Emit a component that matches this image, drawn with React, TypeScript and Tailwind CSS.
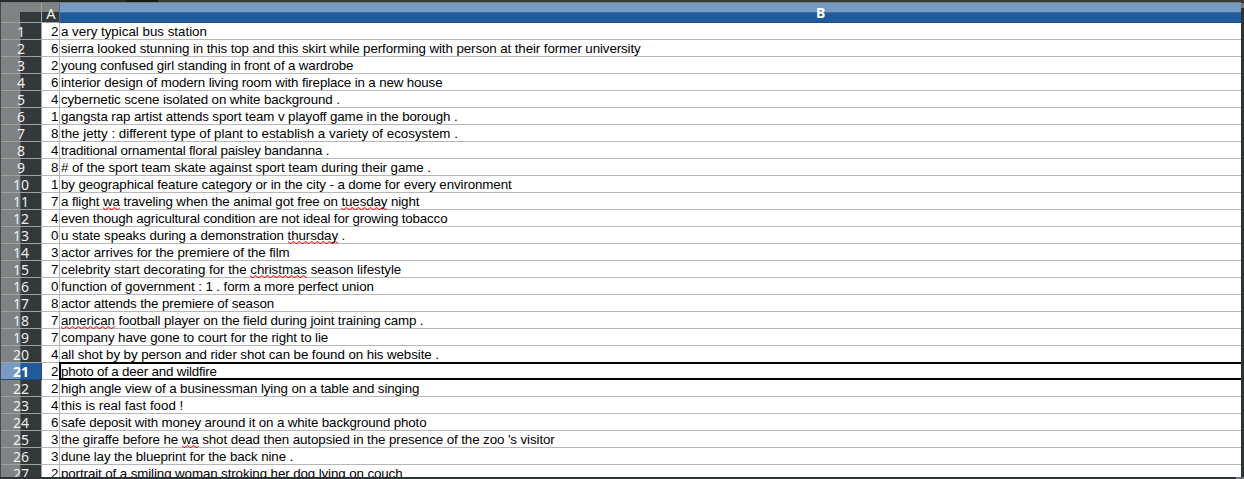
// value, caption, and the pixels by which the caption is tightened
const rows: [number, string, number][] = [
  [2, 'a very typical bus station', 0],
  [6, 'sierra looked stunning in this top and this skirt while performing with person at their former university', 10],
  [2, 'young confused girl standing in front of a wardrobe', 7],
  [6, 'interior design of modern living room with fireplace in a new house', 9],
  [4, 'cybernetic scene isolated on white background .', 5],
  [1, 'gangsta rap artist attends sport team v playoff game in the borough .', 7],
  [8, 'the jetty : different type of plant to establish a variety of ecosystem .', 0],
  [4, 'traditional ornamental floral paisley bandanna .', 8],
  [8, '# of the sport team skate against sport team during their game .', 5],
  [1, 'by geographical feature category or in the city - a dome for every environment', 8],
  [7, 'a flight wa traveling when the animal got free on tuesday night', 7],
  [4, 'even though agricultural condition are not ideal for growing tobacco', 10],
  [0, 'u state speaks during a demonstration thursday .', 4],
  [3, 'actor arrives for the premiere of the film', 4],
  [7, 'celebrity start decorating for the christmas season lifestyle', 2],
  [0, 'function of government : 1 . form a more perfect union', 5],
  [8, 'actor attends the premiere of season', 4],
  [7, 'american football player on the field during joint training camp .', 8],
  [7, 'company have gone to court for the right to lie', 4],
  [4, 'all shot by by person and rider shot can be found on his website .', 6],
  [2, 'photo of a deer and wildfire', 5],
  [2, 'high angle view of a businessman lying on a table and singing', 7],
  [4, 'this is real fast food !', 0],
  [6, 'safe deposit with money around it on a white background photo', 8],
  [3, "the giraffe before he wa shot dead then autopsied in the presence of the zoo 's visitor", 8],
  [3, 'dune lay the blueprint for the back nine .', 5],
  [2, 'portrait of a smiling woman stroking her dog lying on couch', 6],
];

const SELECTED = 21;

function Squiggle({ id }: { id: string }) {
  return (
    <svg className="absolute left-0 top-[14px] h-[3px] w-full" aria-hidden="true">
      <defs>
        <pattern id={id} width="6" height="3" patternUnits="userSpaceOnUse">
          <path d="M-1 0.8 L0 0.8 L2 2.4 L3 2.4 L5 0.8 L7 0.8" fill="none" stroke="#f00000" strokeWidth="1" />
        </pattern>
      </defs>
      <rect width="100%" height="3" fill={`url(#${id})`} />
    </svg>
  );
}

function CellText({ text, row, tighten }: { text: string; row: number; tighten: number }) {
  return (
    <span style={{ letterSpacing: `${-tighten / text.length}px` }}>
      {text.split(/\b(wa|tuesday|thursday|christmas|american)\b/).map((part, i) =>
        i % 2 ? (
          <span key={i} className="relative inline-block">
            {part}
            <Squiggle id={`sq-${row}-${i}`} />
          </span>
        ) : (
          part
        ),
      )}
    </span>
  );
}

export default function App() {
  return (
    <div className="flex h-[479px] w-[1244px] flex-col overflow-hidden bg-[#2e3436] font-['Liberation_Sans',Arial,sans-serif] text-[13.333px] leading-[17px] text-black">
      <div className="flex h-0.5 shrink-0 bg-[#363b3c]">
        <div className="w-[127px] bg-[#252a2b]" />
        <div className="w-[31px] bg-[#151819]" />
      </div>
      <div className="flex h-[475px] shrink-0">
        <div className="w-px bg-[#45474a]" />
        <div className="w-[1240px] overflow-hidden bg-white">
          <div className="flex h-[21px] border-t border-[#777b7b] font-['Noto_Sans','Open_Sans',sans-serif] text-sm text-white">
            <div className="flex w-10 flex-col border-b border-[#a0a2a2] bg-[#7f8383]">
              <div className="ml-[19px] mt-[9px] h-2.5 bg-[#33393b]" />
            </div>
            <div className="w-px bg-[#a0a2a2]" />
            <div className="w-[17px] border-b border-[#a0a2a2] bg-[linear-gradient(#7f8383_9px,#33393b_9px)] pl-px text-center text-[14.667px] leading-[20px] text-[#eeeeec]">A</div>
            <div className="w-px bg-[#4c6c92]" />
            <div className="w-[1181px] border-b border-[#1b4b80] bg-[linear-gradient(#729fcf_0,#779bc2_1px,#779bc2_9px,#3d6fa6_9px,#3d6fa6_10px,#205c9c_10px)] pl-[756px] pt-px text-sm font-bold leading-[18px]">B</div>
          </div>
          {rows.map(([value, text, tighten], i) => {
            const n = i + 1;
            const selected = n === SELECTED;
            return (
              <div key={n} className="flex h-[17px]">
                <div
                  className={`w-10 border-b text-center font-['Noto_Sans','Open_Sans',sans-serif] text-sm leading-[17px] ${
                    selected
                      ? 'border-[#1b4b80] bg-[linear-gradient(90deg,#779bc2_19px,#3d6fa6_19px,#3d6fa6_20px,#205c9c_20px)] font-bold text-white'
                      : 'border-[#a0a2a2] bg-[linear-gradient(90deg,#7f8383_19px,#4f5556_19px,#4f5556_20px,#33393b_20px)] text-[#eeeeec]'
                  }`}
                >
                  {n}
                </div>
                <div className={`w-px ${selected ? 'bg-[#1b4b80]' : 'bg-[#a0a2a2]'}`} />
                <div className="w-[18px] border-b border-r border-[#b7b7b7] pr-[0.5px] text-right">{value}</div>
                <div className="relative w-[1181px] whitespace-pre border-b border-[#b7b7b7] pl-px">
                  <CellText text={text} row={n} tighten={tighten} />
                  {selected && <div className="absolute -left-px -top-px h-[18px] w-[1190px] border-2 border-black" />}
                </div>
              </div>
            );
          })}
        </div>
        <div className="w-[3px]">
          <div className="mt-px h-[5px] bg-[#777771]" />
        </div>
      </div>
      <div className="flex h-0.5 justify-end">
        <div className="w-[3px] bg-[#858786]" />
        <div className="w-[5px] bg-[#6a6d6e]" />
      </div>
    </div>
  );
}
